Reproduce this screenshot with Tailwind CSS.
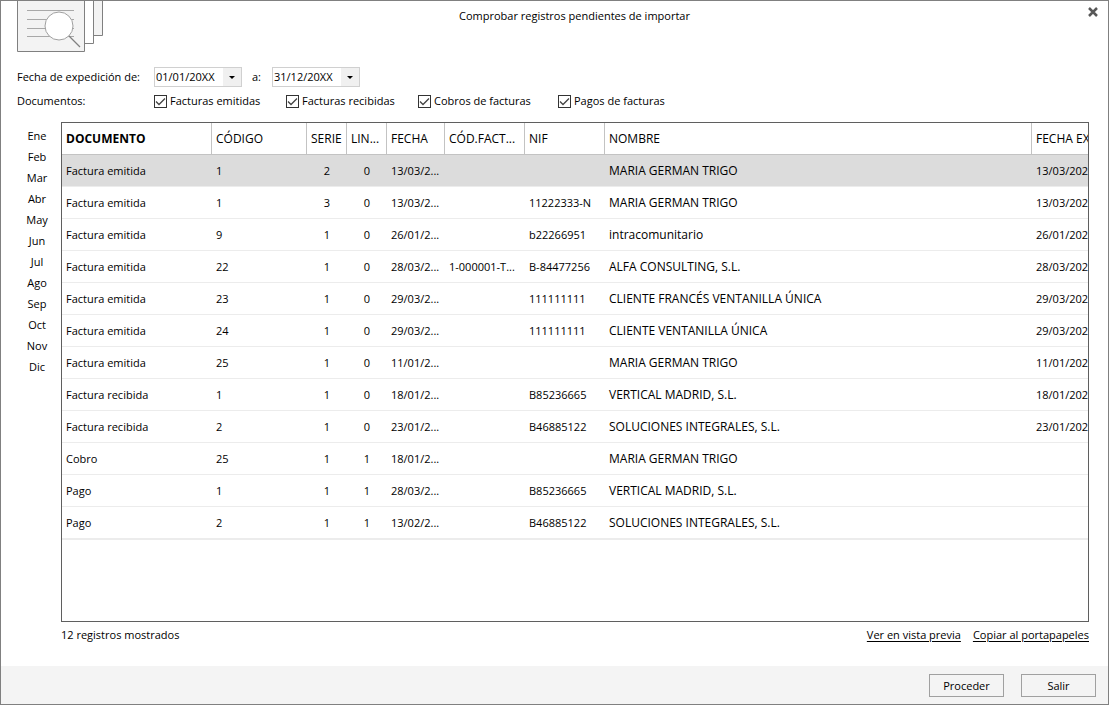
<!DOCTYPE html>
<html lang="es">
<head>
<meta charset="utf-8">
<meta name="viewport" content="width=device-width, initial-scale=1">
<title>Comprobar registros pendientes de importar</title>
<script src="https://cdn.jsdelivr.net/npm/@tailwindcss/browser@4"></script>
</head>
<body class="bg-white text-black font-['Segoe_UI','Open_Sans',sans-serif] text-[11px] leading-4">
<div class="min-h-screen flex flex-col border border-[#808080]">
  <header class="flex items-start pl-4">
    <svg class="shrink-0" width="86" height="52" viewBox="0 0 86 52" fill="none" stroke="#808080" aria-hidden="true">
      <path d="M76.5 0V34.5H85.5V0" fill="#f3f3f3"/>
      <path d="M67.5 0V42.5H76.5V0" fill="#fff"/>
      <path d="M.5 0V50.500H67.500V0" fill="#f3f3f3"/>
      <path d="M10 9.500H57M10 18.500H57M10 27.500H57M10 35.500H57" stroke="#a8a8a8"/>
      <circle cx="42" cy="25" r="14" fill="#fff" stroke="#a0a0a0"/>
      <path d="M52 35L63 46" stroke-width="1.200"/>
    </svg>
    <h1 class="flex-1 text-center pt-[7px]">Comprobar registros pendientes de importar</h1>
    <div class="w-[62px] flex justify-end">
      <button type="button" aria-label="Cerrar" class="p-1.5"><svg width="18" height="10" viewBox="0 0 18 10" stroke="#585858" stroke-width="2.500"><path d="M5 1L13 9M13 1L5 9"/></svg></button>
    </div>
  </header>

  <form class="pl-4 pt-3.5 flex flex-col gap-1.5">
    <div class="flex items-center h-5">
      <label for="desde" class="w-[137px]">Fecha de expedición de:</label>
      <div class="flex w-[88px] h-5 border border-[#d0d0d0]">
        <input id="desde" type="text" value="01/01/20XX" class="min-w-0 flex-1 pl-px outline-none">
        <button type="button" aria-label="Elegir fecha inicial" class="w-[18px] bg-[#f0f0f0] flex items-center justify-center"><svg width="6" height="3" viewBox="0 0 6 3"><path d="M0 0H6L3 3Z"/></svg></button>
      </div>
      <label for="hasta" class="w-[30px] pl-2.5">a:</label>
      <div class="flex w-[88px] h-5 border border-[#d0d0d0]">
        <input id="hasta" type="text" value="31/12/20XX" class="min-w-0 flex-1 pl-px outline-none">
        <button type="button" aria-label="Elegir fecha final" class="w-[18px] bg-[#f0f0f0] flex items-center justify-center"><svg width="6" height="3" viewBox="0 0 6 3"><path d="M0 0H6L3 3Z"/></svg></button>
      </div>
    </div>
    <fieldset class="flex items-center h-6">
      <span class="w-[137px]">Documentos:</span>
      <label class="flex items-center gap-[3px] w-[132px]"><span class="grid"><input type="checkbox" checked class="peer appearance-none col-start-1 row-start-1 size-[13px] border border-[#333] bg-white"><svg class="col-start-1 row-start-1 invisible peer-checked:visible pointer-events-none" width="13" height="13" fill="none" stroke="#444" stroke-width="1.300"><path d="M2 6.500L5 9.500L11 3.500"/></svg></span>Facturas emitidas</label>
      <label class="flex items-center gap-[3px] w-[132px]"><span class="grid"><input type="checkbox" checked class="peer appearance-none col-start-1 row-start-1 size-[13px] border border-[#333] bg-white"><svg class="col-start-1 row-start-1 invisible peer-checked:visible pointer-events-none" width="13" height="13" fill="none" stroke="#444" stroke-width="1.300"><path d="M2 6.500L5 9.500L11 3.500"/></svg></span>Facturas recibidas</label>
      <label class="flex items-center gap-[3px] w-[140px]"><span class="grid"><input type="checkbox" checked class="peer appearance-none col-start-1 row-start-1 size-[13px] border border-[#333] bg-white"><svg class="col-start-1 row-start-1 invisible peer-checked:visible pointer-events-none" width="13" height="13" fill="none" stroke="#444" stroke-width="1.300"><path d="M2 6.500L5 9.500L11 3.500"/></svg></span>Cobros de facturas</label>
      <label class="flex items-center gap-[3px]"><span class="grid"><input type="checkbox" checked class="peer appearance-none col-start-1 row-start-1 size-[13px] border border-[#333] bg-white"><svg class="col-start-1 row-start-1 invisible peer-checked:visible pointer-events-none" width="13" height="13" fill="none" stroke="#444" stroke-width="1.300"><path d="M2 6.500L5 9.500L11 3.500"/></svg></span>Pagos de facturas</label>
    </fieldset>
  </form>

  <main class="flex-1 flex pt-[5px] pr-[19px]">
    <nav class="w-[60px] shrink-0 pl-3 pt-[3px] flex flex-col items-center leading-[21px]">
      <button type="button">Ene</button><button type="button">Feb</button><button type="button">Mar</button><button type="button">Abr</button><button type="button">May</button><button type="button">Jun</button><button type="button">Jul</button><button type="button">Ago</button><button type="button">Sep</button><button type="button">Oct</button><button type="button">Nov</button><button type="button">Dic</button>
    </nav>
    <div class="flex-1 min-w-0 flex flex-col">
      <div class="flex-1 border border-[#5f5f5f] overflow-hidden">
        <table class="w-full table-fixed border-separate border-spacing-0 whitespace-nowrap [&_td]:h-8 [&_td]:pl-1 [&_td]:overflow-hidden [&_td]:border-b [&_td]:border-[#ececec] [&_th]:h-8 [&_th]:pl-1 [&_th]:text-left [&_th]:text-[12px] [&_th]:font-normal [&_th]:overflow-hidden [&_th]:border-b [&_th]:border-r [&_th]:border-[#c3c3c3] [&_th:last-child]:border-r-0 [&_td:nth-child(3)]:text-center [&_td:nth-child(3)]:pr-1 [&_td:nth-child(4)]:text-center [&_td:nth-child(4)]:pr-1 [&_td:nth-child(8)]:text-[12px] [&_tbody_tr:last-child_td]:border-b-2 [&_tbody_tr:last-child_td]:h-[33px]">
          <colgroup><col class="w-[150px]"><col class="w-[95px]"><col class="w-[40px]"><col class="w-[40px]"><col class="w-[58px]"><col class="w-[80px]"><col class="w-[80px]"><col><col class="w-[56px]"></colgroup>
          <thead><tr><th><b>DOCUMENTO</b></th><th>CÓDIGO</th><th>SERIE</th><th>LIN...</th><th>FECHA</th><th>CÓD.FACT...</th><th>NIF</th><th>NOMBRE</th><th>FECHA EX</th></tr></thead>
          <tbody>
            <tr class="bg-[#dcdcdc]"><td>Factura emitida</td><td>1</td><td>2</td><td>0</td><td>13/03/2...</td><td></td><td></td><td>MARIA GERMAN TRIGO</td><td>13/03/202</td></tr>
            <tr><td>Factura emitida</td><td>1</td><td>3</td><td>0</td><td>13/03/2...</td><td></td><td>11222333-N</td><td>MARIA GERMAN TRIGO</td><td>13/03/202</td></tr>
            <tr><td>Factura emitida</td><td>9</td><td>1</td><td>0</td><td>26/01/2...</td><td></td><td>b22266951</td><td>intracomunitario</td><td>26/01/202</td></tr>
            <tr><td>Factura emitida</td><td>22</td><td>1</td><td>0</td><td>28/03/2...</td><td>1-000001-T...</td><td>B-84477256</td><td>ALFA CONSULTING, S.L.</td><td>28/03/202</td></tr>
            <tr><td>Factura emitida</td><td>23</td><td>1</td><td>0</td><td>29/03/2...</td><td></td><td>111111111</td><td>CLIENTE FRANCÉS VENTANILLA ÚNICA</td><td>29/03/202</td></tr>
            <tr><td>Factura emitida</td><td>24</td><td>1</td><td>0</td><td>29/03/2...</td><td></td><td>111111111</td><td>CLIENTE VENTANILLA ÚNICA</td><td>29/03/202</td></tr>
            <tr><td>Factura emitida</td><td>25</td><td>1</td><td>0</td><td>11/01/2...</td><td></td><td></td><td>MARIA GERMAN TRIGO</td><td>11/01/202</td></tr>
            <tr><td>Factura recibida</td><td>1</td><td>1</td><td>0</td><td>18/01/2...</td><td></td><td>B85236665</td><td>VERTICAL MADRID, S.L.</td><td>18/01/202</td></tr>
            <tr><td>Factura recibida</td><td>2</td><td>1</td><td>0</td><td>23/01/2...</td><td></td><td>B46885122</td><td>SOLUCIONES INTEGRALES, S.L.</td><td>23/01/202</td></tr>
            <tr><td>Cobro</td><td>25</td><td>1</td><td>1</td><td>18/01/2...</td><td></td><td></td><td>MARIA GERMAN TRIGO</td><td></td></tr>
            <tr><td>Pago</td><td>1</td><td>1</td><td>1</td><td>28/03/2...</td><td></td><td>B85236665</td><td>VERTICAL MADRID, S.L.</td><td></td></tr>
            <tr><td>Pago</td><td>2</td><td>1</td><td>1</td><td>13/02/2...</td><td></td><td>B46885122</td><td>SOLUCIONES INTEGRALES, S.L.</td><td></td></tr>
          </tbody>
        </table>
      </div>
      <div class="h-11 pt-[5px] flex items-start">
        <p class="flex-1">12 registros mostrados</p>
        <div class="flex gap-3"><a href="#" class="underline underline-offset-2">Ver en vista previa</a><a href="#" class="underline underline-offset-2">Copiar al portapapeles</a></div>
      </div>
    </div>
  </main>

  <footer class="bg-[#f4f4f4] h-[38px] pt-2 pl-4 pr-3 flex items-start justify-end gap-[17px]">
    <button type="button" class="w-[75px] h-[23px] border border-[#a0a0a0]">Proceder</button>
    <button type="button" class="w-[75px] h-[23px] border border-[#a0a0a0]">Salir</button>
  </footer>
</div>
</body>
</html>
